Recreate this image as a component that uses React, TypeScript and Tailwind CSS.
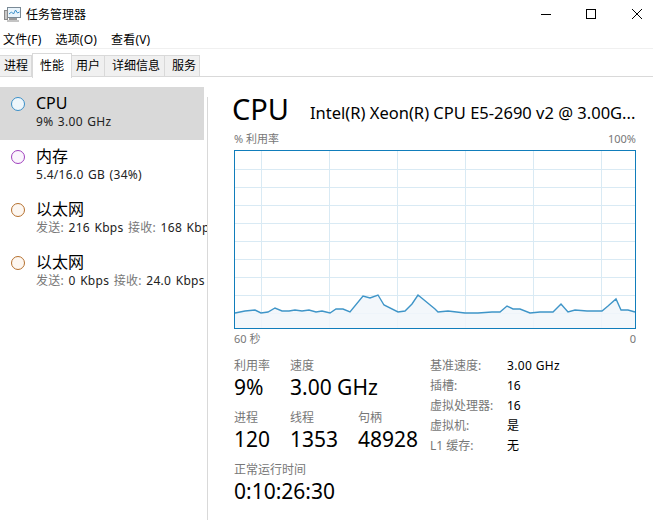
const line =
  "235,313 245,311 255,310 261,313 268,312 275,308 282,311 289,311 295,310 302,311 309,310 316,312 322,311 330,313 336,309 343,309 350,312 363,296 370,298 378,295 384,305 398,312 405,311 412,304 418,295 435,309 438,312 448,311 465,313 478,313 492,312 500,312 507,306 513,309 520,309 530,313 540,312 553,312 561,304 568,312 575,310 587,311 602,311 608,306 616,299 621,310 628,310 635,312";

const gridX = [261, 329, 397, 465, 533, 601];
const gridY = [169, 187, 205, 223, 241, 259, 277, 295, 313];

function AppIcon() {
  return (
    <svg width="17" height="16" viewBox="0 0 17 16" className="ml-1">
      <rect x="3.5" y="0.5" width="13" height="10" fill="#eaf4fb" stroke="#7a8a96" />
      <path d="M5 7l2.500-2 2 2 2-4 2 3 2-1" fill="none" stroke="#3a8fc8" />
      <rect x="0.500" y="3.500" width="3" height="9" fill="#c8c8c8" stroke="#8a8a8a" />
      <rect x="5" y="11" width="8" height="2" fill="#9a9a9a" />
      <rect x="3" y="13" width="12" height="2" fill="#c4c4c4" />
    </svg>
  );
}

function WindowButtons() {
  return (
    <div className="flex items-center">
      <svg width="46" height="30" viewBox="0 0 46 30">
        <path d="M19 14.500h10" stroke="#000" />
      </svg>
      <svg width="46" height="30" viewBox="0 0 46 30">
        <rect x="18.500" y="9.500" width="9" height="9" fill="none" stroke="#000" />
      </svg>
      <svg width="39" height="30" viewBox="0 0 39 30">
        <path d="M18 9l10 10M28 9l-10 10" stroke="#000" />
      </svg>
    </div>
  );
}

function Tab({ label, width, active }: { label: string; width: string; active?: boolean }) {
  if (active) {
    return (
      <div className={"relative z-10 -mb-px flex h-[25px] items-center border border-b-0 border-[#d9d9d9] bg-white pl-[7px] text-[12px] text-black " + width}>
        {label}
      </div>
    );
  }
  return (
    <div className={"mt-[2px] flex h-[22px] items-center border border-l-0 border-[#d9d9d9] bg-[#f0f0f0] text-[12px] text-black " + width}>
      {label}
    </div>
  );
}

function SideItem(props: {
  title: string;
  ring: string;
  selected?: boolean;
  children: React.ReactNode;
}) {
  return (
    <div className={"flex h-[53px] w-[204px] " + (props.selected ? "bg-[#d9d9d9]" : "")}>
      <div className={"ml-[11px] mt-[10px] h-[14px] w-[14px] shrink-0 rounded-full border-[1.500px] " + props.ring} />
      <div className="ml-[11px] min-w-0 pt-[5px]">
        <div className="text-[16px] leading-[22px] text-black">{props.title}</div>
        <div className="whitespace-nowrap text-[12px] leading-[16px] tracking-[0.3px] text-[#222] [word-spacing:1px]">{props.children}</div>
      </div>
    </div>
  );
}

function Stat({ label, value, className }: { label: string; value: string; className?: string }) {
  return (
    <div className={className}>
      <div className="text-[12px] leading-[16px] text-[#777]">{label}</div>
      <div className="whitespace-nowrap text-[21px] leading-[27px] text-black">{value}</div>
    </div>
  );
}

function Chart() {
  return (
    <svg width="403" height="180" viewBox="234 150 403 180" className="block">
      <rect x="234.500" y="150.500" width="401" height="178" fill="#fff" stroke="#117dbb" />
      {gridX.map((x) => (
        <path key={x} d={`M${x + 0.5} 151V328`} stroke="#d9eaf4" />
      ))}
      {gridY.map((y) => (
        <path key={y} d={`M235 ${y + 0.5}H635`} stroke="#d9eaf4" />
      ))}
      <polygon points={`235,328 ${line} 635,328`} fill="#f1f6fa" fillOpacity="0.85" />
      <polyline points={line} fill="none" stroke="#3f95c8" strokeWidth="1.400" />
      <rect x="234.500" y="150.500" width="401" height="178" fill="none" stroke="#117dbb" />
    </svg>
  );
}

export default function App() {
  return (
    <div className="flex h-[520px] w-[653px] flex-col overflow-hidden bg-white font-['Noto_Sans','Noto_Sans_CJK_SC',sans-serif]">
      <div className="flex h-[30px] items-center justify-between">
        <div className="flex items-center gap-[5px] text-[12px] text-black">
          <AppIcon />
          <span>任务管理器</span>
        </div>
        <WindowButtons />
      </div>
      <div className="flex h-[19px] items-center gap-[14px] border-b border-[#f0f0f0] pl-[3px] pt-[2px] text-[12px] tracking-[0.2px] text-black">
        <span>文件(F)</span>
        <span>选项(O)</span>
        <span>查看(V)</span>
      </div>
      <div className="mt-[4px] flex h-[24px] items-start border-b border-[#d9d9d9]">
        <Tab label="进程" width="w-[32px] pl-[4px] border-l" />
        <Tab label="性能" width="w-[40px]" active />
        <Tab label="用户" width="w-[33px] pl-[4px]" />
        <Tab label="详细信息" width="w-[60px] pl-[7px]" />
        <Tab label="服务" width="w-[35px] pl-[7px]" />
      </div>
      <div className="flex min-h-0 flex-1">
        <div className="w-[207px] shrink-0 overflow-hidden pt-[10px]">
          <SideItem title="CPU" ring="border-[#3a8fc8] bg-[#eef6fb]" selected>
            9% 3.00 GHz
          </SideItem>
          <SideItem title="内存" ring="border-[#a040bd] bg-[#fbf5fd]">
            5.4/16.0 GB (34%)
          </SideItem>
          <SideItem title="以太网" ring="border-[#b5702e] bg-[#fdf7f1]">
            <span className="text-[#777]">发送:</span> 216 Kbps <span className="text-[#777]">接收:</span> 168 Kbps
          </SideItem>
          <SideItem title="以太网" ring="border-[#b5702e] bg-[#fdf7f1]">
            <span className="text-[#777]">发送:</span> 0 Kbps <span className="text-[#777]">接收:</span> 24.0 Kbps
          </SideItem>
        </div>
        <div className="mt-[20px] flex-1 border-l border-[#d9d9d9] pl-[26px]">
          <div className="-mt-[7px] flex h-[40px] items-start">
            <div className="-ml-[2px] -mt-px w-[78px] text-[29px] leading-[40px] text-black">CPU</div>
            <div className="mt-[11px] whitespace-nowrap text-[16.500px] leading-[24px] text-black">
              Intel(R) Xeon(R) CPU E5-2690 v2 @ 3.00G...
            </div>
          </div>
          <div className="mt-px flex h-[16px] w-[402px] justify-between text-[11px] leading-[16px] text-[#777]">
            <span>% 利用率</span>
            <span>100%</span>
          </div>
          <div className="mt-[3px]">
            <Chart />
          </div>
          <div className="mt-px flex h-[16px] w-[402px] justify-between text-[11px] leading-[16px] text-[#777]">
            <span>60 秒</span>
            <span>0</span>
          </div>
          <div className="mt-[11px] flex">
            <div className="w-[196px]">
              <div className="flex">
                <Stat label="利用率" value="9%" className="w-[56px]" />
                <Stat label="速度" value="3.00 GHz" />
              </div>
              <div className="mt-[9px] flex">
                <Stat label="进程" value="120" className="w-[56px]" />
                <Stat label="线程" value="1353" className="w-[68px]" />
                <Stat label="句柄" value="48928" />
              </div>
              <Stat label="正常运行时间" value="0:10:26:30" className="mt-[9px]" />
            </div>
            <div className="-mt-[2px] grid auto-rows-[20px] grid-cols-[77px_1fr] text-[12px] leading-[20px]">
              <span className="text-[#777]">基准速度:</span>
              <span className="tracking-[0.35px]">3.00 GHz</span>
              <span className="text-[#777]">插槽:</span>
              <span>16</span>
              <span className="text-[#777]">虚拟处理器:</span>
              <span>16</span>
              <span className="text-[#777]">虚拟机:</span>
              <span>是</span>
              <span className="text-[#777]">L1 缓存:</span>
              <span>无</span>
            </div>
          </div>
        </div>
      </div>
    </div>
  );
}
